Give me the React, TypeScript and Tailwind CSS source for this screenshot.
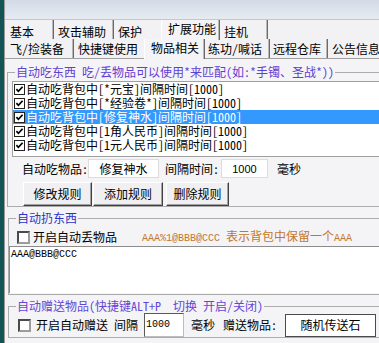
import React from 'react';

// classic win32 style "扩展功能 / 物品相关" page

const eatItems = [
  '自动吃背包中[*元宝]间隔时间[1000]',
  '自动吃背包中[*经验卷*]间隔时间[1000]',
  '自动吃背包中[修复神水]间隔时间[1000]',
  '自动吃背包中[1角人民币]间隔时间[1000]',
  '自动吃背包中[1元人民币]间隔时间[1000]',
];

const topTabs = [
  { label: '基本', cls: 'w-[49px] pl-[5px]' },
  { label: '攻击辅助', cls: 'w-[60px] pl-[4px]' },
  { label: '保护', cls: 'w-[49px] pl-[4px]' },
  { label: '扩展功能', cls: 'w-[59px] pl-[4px]', selected: true },
  { label: '挂机', cls: 'w-[48px] pl-[4px]' },
];

const subTabs = [
  { label: '飞/捡装备', cls: 'w-[69px] pl-[5px]' },
  { label: '快捷键使用', cls: 'w-[72px] pl-[4px]' },
  { label: '物品相关', cls: 'w-[61px] pl-[4px]', selected: true },
  { label: '练功/喊话', cls: 'w-[65px] pl-[3px]' },
  { label: '远程仓库', cls: 'w-[58px] pl-[3px]' },
  { label: '公告信息', cls: 'w-[60px] pl-[4px]' },
];

function Tab({ label, cls, selected, top }: { label: string; cls: string; selected?: boolean; top: boolean }) {
  const pad = selected ? 'pt-[2px]' : top ? 'pt-[5px]' : 'pt-[3px]';
  return (
    <div
      className={`${cls} ${pad} shrink-0 whitespace-nowrap border-r border-r-[#6a6a6a] shadow-[inset_-1px_0_0_#b8b8b8] ${
        selected ? 'relative z-10 -ml-[2px] h-[20px] border-l border-l-white bg-[#f4f3f6]' : 'h-full'
      }`}
    >
      <span className={selected ? 'pl-[2px]' : ''}>{label}</span>
    </div>
  );
}

function CheckIcon() {
  return (
    <svg width="11" height="11" viewBox="0 0 11 11" className="shrink-0">
      <rect x="0.5" y="0.5" width="10" height="10" fill="#fff" stroke="#222" />
      <path d="M2.4 5.1 L4.4 7.3 L8.6 2.7" fill="none" stroke="#000" strokeWidth="1.7" />
    </svg>
  );
}

function EmptyBox() {
  return (
    <span className="block w-[13px] h-[13px] shrink-0 bg-white border-2 border-t-[#4a4a4a] border-l-[#4a4a4a] border-r-[#9c9c9c] border-b-[#9c9c9c]" />
  );
}

function Btn({ label, cls }: { label: string; cls: string }) {
  return (
    <div
      className={`${cls} h-[24px] flex items-center justify-center bg-[#f0eff2] border border-t-white border-l-white border-r-[#404040] border-b-[#404040] shadow-[inset_-1px_-1px_0_#a3a3a3]`}
    >
      {label}
    </div>
  );
}

export default function App() {
  return (
    <div className="w-[379px] h-[343px] overflow-hidden flex bg-[#f4f3f6] text-[12px] leading-[14px] text-black font-['Noto_Sans_Mono_CJK_SC','Noto_Sans_CJK_SC',sans-serif]">
      {/* strip of the window behind */}
      <div className="w-[4px] shrink-0 bg-[#135555]" />

      <div className="flex-1 min-w-0 flex flex-col border-l border-[#9a9a9a]">
        <div className="h-[20px] shrink-0 bg-linear-to-b from-[#d3dbe6] to-[#e6ebf1] border-b border-[#c2c8d0]" />

        {/* outer tabs */}
        <div className="h-[19px] shrink-0 flex bg-[#f2f2f4]">
          {topTabs.map((t) => (
            <Tab key={t.label} {...t} top />
          ))}
        </div>

        {/* inner tabs */}
        <div className="h-[19px] shrink-0 flex bg-[#f2f2f4]">
          {subTabs.map((t) => (
            <Tab key={t.label} {...t} top={false} />
          ))}
        </div>

        <div className="flex-1 border-t border-[#a0a0a0] bg-[#f4f3f6] pl-[2px] pt-[6px]">
          {/* 自动吃东西 */}
          <fieldset className="w-[400px] border border-[#ababab] pl-[4px]">
            <legend className="ml-[3px] px-[1px] text-[#5f3fd2] whitespace-nowrap">
              自动吃东西 吃/丢物品可以使用*来匹配(如:*手镯、圣战*))
            </legend>
            <div className="mt-[2px] border border-[#a0a0a0] bg-white pb-[4px]">
              {eatItems.map((it, i) => (
                <div
                  key={it}
                  className={`h-[14px] flex items-center gap-[1px] pl-[1px] whitespace-nowrap ${
                    i === 2 ? 'bg-[#3399ff] text-white' : ''
                  }`}
                >
                  <CheckIcon />
                  <span>{it}</span>
                </div>
              ))}
            </div>

            <div className="mt-[2px] h-[19px] flex items-center pl-[10px] whitespace-nowrap">
              <span className="w-[66px]">自动吃物品:</span>
              <div className="w-[71px] h-[19px] bg-white border border-[#dcdcdc] flex items-center justify-center">
                修复神水
              </div>
              <span className="ml-[6px] w-[56px]">间隔时间:</span>
              <div className="w-[47px] h-[19px] bg-white border border-[#dcdcdc] flex items-center justify-center font-['Liberation_Sans',sans-serif] text-[11px]">
                1000
              </div>
              <span className="ml-[9px]">毫秒</span>
            </div>

            <div className="mt-[4px] flex pl-[11px]">
              <Btn label="修改规则" cls="w-[69px]" />
              <Btn label="添加规则" cls="ml-[1px] w-[70px]" />
              <Btn label="删除规则" cls="ml-[3px] w-[63px]" />
            </div>
          </fieldset>

          {/* 自动扔东西 */}
          <fieldset className="mt-[4px] ml-[1px] w-[400px] border border-[#ababab] pb-[1px]">
            <legend className="ml-[7px] px-[1px] text-[#2a35c8]">自动扔东西</legend>
            <div className="mt-[5px] h-[14px] flex items-center pl-[8px] whitespace-nowrap">
              <EmptyBox />
              <span className="ml-[3px]">开启自动丢物品</span>
              <span className="ml-[25px] text-[#c2772c]">
                <span className="font-['Liberation_Mono',monospace] text-[10px]">AAA%1@BBB@CCC</span>
                <span> 表示背包中保留一个</span>
                <span className="font-['Liberation_Mono',monospace] text-[10px]">AAA</span>
              </span>
            </div>
            <div className="mt-[2px] h-[47px] bg-white border-t border-l border-[#8c8c8c] pl-[1px] pt-[2px] font-['Liberation_Mono',monospace] text-[10px] leading-[12px]">
              AAA@BBB@CCC
            </div>
          </fieldset>

          {/* 自动赠送物品 */}
          <fieldset className="mt-[4px] ml-[1px] w-[400px] border border-[#ababab]">
            <legend className="ml-[7px] px-[1px] text-[#6446d6] whitespace-pre">
              {'自动赠送物品(快捷键ALT+P  切换 开启/关闭)'}
            </legend>
            <div className="h-[24px] flex items-center pl-[9px] whitespace-nowrap">
              <EmptyBox />
              <span className="ml-[5px]">开启自动赠送</span>
              <span className="ml-[6px]">间隔</span>
              <div className="ml-[6px] w-[40px] h-[24px] bg-white border border-t-[#5a5a5a] border-l-[#5a5a5a] border-r-[#bdbdbd] border-b-[#bdbdbd] flex items-center pl-[1px] font-['Liberation_Mono',monospace] text-[10px]">
                1000
              </div>
              <span className="ml-[7px]">毫秒</span>
              <span className="ml-[8px]">赠送物品:</span>
              <div className="ml-[8px] w-[91px] h-[23px] bg-white border border-[#4a4a4a] flex items-center justify-center">
                随机传送石
              </div>
            </div>
          </fieldset>
        </div>
      </div>
    </div>
  );
}
